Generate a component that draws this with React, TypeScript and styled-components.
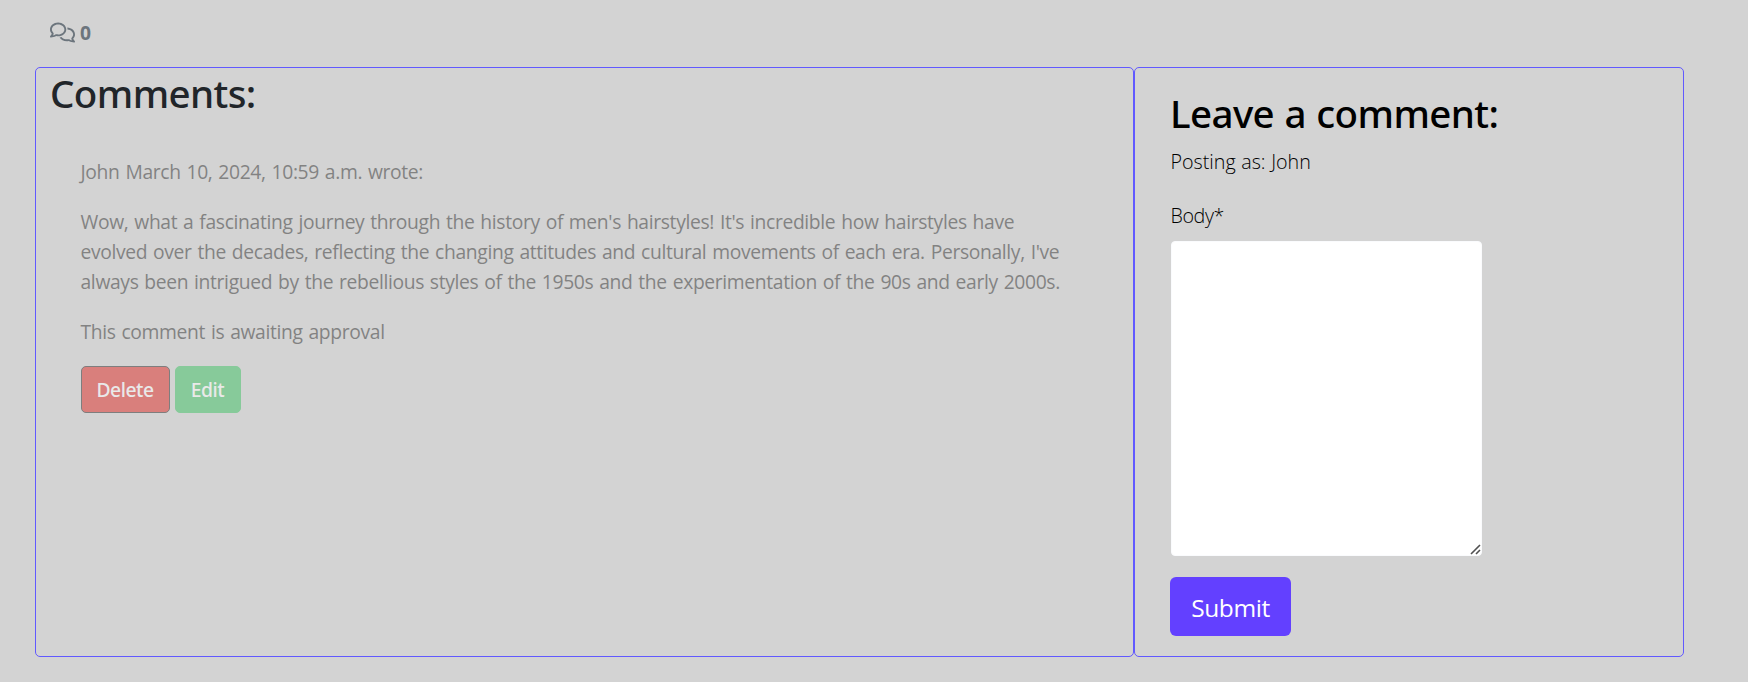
import React from "react";
import styled, { createGlobalStyle } from "styled-components";
import { FaRegComments } from "react-icons/fa6";

const GlobalStyle = createGlobalStyle`
  *, *::before, *::after { box-sizing: border-box; }
  body {
    margin: 0;
    background: #d3d3d3;
    color: #212529;
    font-family: "Open Sans", "Noto Sans", sans-serif;
    font-size: 19.3px;
    font-weight: 400;
    line-height: 30px;
    letter-spacing: -0.35px;
    word-spacing: 1.2px;
  }
`;

const Page = styled.main`
  display: flex;
  flex-direction: column;
  width: 1748px;
  height: 682px;
  overflow: hidden;
`;

const CommentCount = styled.div`
  display: flex;
  align-items: center;
  gap: 5px;
  height: 67px;
  padding: 0 0 2px 50px;
  color: #6c757d;
`;

const Count = styled.strong`
  font-weight: 700;
  padding-top: 1px;
`;

const Columns = styled.div`
  display: grid;
  grid-template-columns: 1099px 550px;
  height: 590px;
  margin-left: 35px;
`;

const Card = styled.section<{ $padding: string }>`
  border: 1px solid #6159ff;
  border-radius: 5px;
  padding: ${(p) => p.$padding};
`;

const Heading = styled.h3<{ $color?: string }>`
  margin: 0 0 10px;
  color: ${(p) => p.$color ?? "inherit"};
  font-family: "Noto Sans", sans-serif;
  font-size: 38.5px;
  font-weight: 500;
  line-height: 48px;
  letter-spacing: -0.6px;
  word-spacing: 1px;
`;

const Comment = styled.article`
  width: 1000px;
  margin: 40px 0 0 30px;
  padding-left: 0.5px;
  color: #333;
  opacity: 0.5;
`;

const Paragraph = styled.p`
  margin: 0 0 20px;
`;

const Actions = styled.div`
  display: flex;
  gap: 5px;
  margin-top: -1px;
`;

const ActionButton = styled.button<{ $bg: string; $border: string; $width: number }>`
  width: ${(p) => p.$width}px;
  height: 47px;
  padding: 0;
  border: 1px solid ${(p) => p.$border};
  border-radius: 5px;
  background: ${(p) => p.$bg};
  color: #fff;
  font: 500 19.3px/30px "Noto Sans", sans-serif;
  letter-spacing: -0.45px;
`;

const Form = styled.form`
  display: flex;
  flex-direction: column;
  align-items: flex-start;
  color: #000;
  font-size: 19.7px;
  font-weight: 300;
  letter-spacing: 0;
  word-spacing: 0.5px;
`;

const PostingAs = styled.span`
  padding-left: 0.5px;
`;

const Label = styled.label`
  margin-top: 24px;
  padding-left: 0.5px;
  letter-spacing: -0.4px;
`;

const InputFrame = styled.div`
  position: relative;
  width: 311px;
  height: 315px;
  margin: 10px 0 21px 1px;
`;

const BodyInput = styled.textarea`
  display: block;
  width: 100%;
  height: 100%;
  border: 1px solid #fafbfd;
  border-radius: 4px;
  background: #fff;
  resize: none;
`;

const ResizeGrip = styled.svg`
  position: absolute;
  right: 1px;
  bottom: 1px;
  pointer-events: none;
`;

const SubmitButton = styled.button`
  width: 121px;
  height: 59px;
  padding: 2px 0 0;
  border: 0;
  border-radius: 6px;
  background: #6340ff;
  color: #fff;
  font: 400 24.5px/37px "Open Sans", sans-serif;
  letter-spacing: -0.4px;
`;

export default function App() {
  return (
    <Page>
      <GlobalStyle />
      <CommentCount>
        <FaRegComments size={25} />
        <Count>0</Count>
      </CommentCount>
      <Columns>
        <Card $padding="1px 15px 0 14px">
          <Heading>Comments:</Heading>
          <Comment>
            <Paragraph>John March 10, 2024, 10:59 a.m. wrote:</Paragraph>
            <Paragraph>
              Wow, what a fascinating journey through the history of men's hairstyles! It's
              incredible how hairstyles have evolved over the decades, reflecting the changing
              attitudes and cultural movements of each era. Personally, I've always been intrigued
              by the rebellious styles of the 1950s and the experimentation of the 90s and early
              2000s.
            </Paragraph>
            <Paragraph>This comment is awaiting approval</Paragraph>
            <Actions>
              <ActionButton $bg="#df2d28" $border="#2b2b2b" $width={89}>
                Delete
              </ActionButton>
              <ActionButton $bg="#3dc363" $border="#3dc363" $width={66}>
                Edit
              </ActionButton>
            </Actions>
          </Comment>
        </Card>
        <Card $padding="21px 35px 0">
          <Form onSubmit={(e) => e.preventDefault()}>
            <Heading $color="#000">Leave a comment:</Heading>
            <PostingAs>Posting as: John</PostingAs>
            <Label htmlFor="body">Body*</Label>
            <InputFrame>
              <BodyInput id="body" />
              <ResizeGrip width="11" height="11" viewBox="0 0 11 11">
                <path d="M1 10L10 1M6 10L10 6" stroke="#505050" strokeWidth="1.6" fill="none" />
              </ResizeGrip>
            </InputFrame>
            <SubmitButton type="submit">Submit</SubmitButton>
          </Form>
        </Card>
      </Columns>
    </Page>
  );
}
